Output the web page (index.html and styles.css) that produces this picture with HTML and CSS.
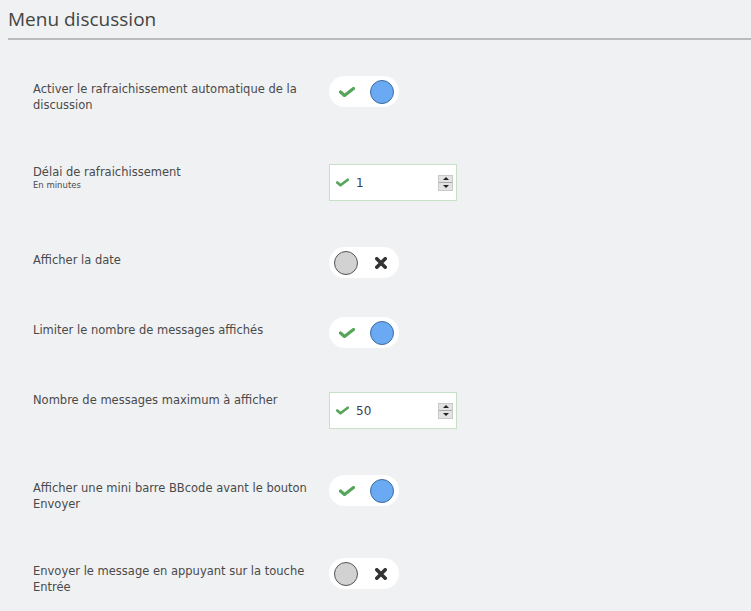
FILE: index.html
```html
<!DOCTYPE html>
<html lang="fr">
<head>
<meta charset="utf-8">
<title>Menu discussion</title>
<link rel="stylesheet" href="styles.css">
</head>
<body>
<div class="page">
  <h1 class="title">Menu discussion</h1>
  <div class="rows">
    <div class="row">
      <div class="label">Activer le rafraichissement automatique de la discussion</div>
      <div class="toggle on"><svg class="chk" viewBox="0 0 16 10"><path d="M1.5 5 L5.5 8.5 L14.5 1.5" /></svg><span class="knob"></span></div>
    </div>
    <div class="row">
      <div class="label">Délai de rafraichissement<span class="hint">En minutes</span></div>
      <div class="field"><svg class="chk" viewBox="0 0 16 10"><path d="M1.5 5 L5.5 8.5 L14.5 1.5" /></svg><span class="value">1</span><span class="spin"><span class="up"></span><span class="down"></span></span></div>
    </div>
    <div class="row">
      <div class="label">Afficher la date</div>
      <div class="toggle off"><span class="knob"></span><svg class="cross" viewBox="0 0 10 10"><path d="M1.5 1.5 L8.5 8.5 M8.5 1.5 L1.5 8.5" /></svg></div>
    </div>
    <div class="row">
      <div class="label">Limiter le nombre de messages affichés</div>
      <div class="toggle on"><svg class="chk" viewBox="0 0 16 10"><path d="M1.5 5 L5.5 8.5 L14.5 1.5" /></svg><span class="knob"></span></div>
    </div>
    <div class="row">
      <div class="label">Nombre de messages maximum à afficher</div>
      <div class="field"><svg class="chk" viewBox="0 0 16 10"><path d="M1.5 5 L5.5 8.5 L14.5 1.5" /></svg><span class="value">50</span><span class="spin"><span class="up"></span><span class="down"></span></span></div>
    </div>
    <div class="row">
      <div class="label">Afficher une mini barre BBcode avant le bouton Envoyer</div>
      <div class="toggle on"><svg class="chk" viewBox="0 0 16 10"><path d="M1.5 5 L5.5 8.5 L14.5 1.5" /></svg><span class="knob"></span></div>
    </div>
    <div class="row">
      <div class="label">Envoyer le message en appuyant sur la touche Entrée</div>
      <div class="toggle off"><span class="knob"></span><svg class="cross" viewBox="0 0 10 10"><path d="M1.5 1.5 L8.5 8.5 M8.5 1.5 L1.5 8.5" /></svg></div>
    </div>
  </div>
</div>
</body>
</html>
```
FILE: styles.css
```css
html, body {
  margin: 0;
  padding: 0;
  background: #f0f1f3;
}
body {
  font-family: "DejaVu Sans", sans-serif;
  color: #4a4a4a;
  width: 751px;
  height: 611px;
  overflow: hidden;
}
.page {
  padding-left: 8px;
}
.title {
  margin: 0;
  font-family: "Open Sans", sans-serif;
  font-weight: normal;
  font-size: 19px;
  line-height: 24px;
  padding-top: 7px;
  padding-bottom: 7px;
  color: #444;
  border-bottom: 2px solid #bbbbbb;
}
.rows {
  padding-top: 39px;
  padding-left: 25px;
}
.row {
  display: flex;
  align-items: flex-start;
}
.label {
  width: 290px;
  margin-right: 6px;
  font-size: 11.5px;
  line-height: 16px;
  padding-top: 2px;
  padding-bottom: 49px;
}
.hint {
  display: block;
  font-size: 8.5px;
  line-height: 11px;
}
.toggle {
  width: 70px;
  height: 31px;
  margin-top: -3px;
  margin-bottom: 42px;
  border-radius: 16px;
  background: #fff;
  display: flex;
  align-items: center;
  box-sizing: border-box;
  flex-shrink: 0;
}
.row:last-child .toggle,
.row:last-child .label {
  margin-bottom: 0;
  padding-bottom: 0;
}
.toggle.on {
  padding-left: 10px;
}
.toggle.off {
  padding-left: 5px;
}
.chk {
  width: 16px;
  height: 10px;
  fill: none;
  stroke: #55a65a;
  stroke-width: 3.2;
  stroke-linecap: round;
  stroke-linejoin: round;
}
.toggle.on .chk {
  margin-right: 15px;
}
.knob {
  width: 22px;
  height: 22px;
  border-radius: 50%;
  box-sizing: content-box;
}
.toggle.on .knob {
  background: #6aaaf2;
  border: 1px solid #3f6c9e;
}
.toggle.off .knob {
  background: #d2d2d2;
  border: 1px solid #555;
  margin-right: 17px;
}
.cross {
  width: 12px;
  height: 12px;
  fill: none;
  stroke: #333;
  stroke-width: 3;
  stroke-linecap: round;
}
.field {
  width: 128px;
  height: 37px;
  margin-top: 2px;
  margin-bottom: 49px;
  box-sizing: border-box;
  background: #fff;
  border: 1px solid #c8dfc8;
  display: flex;
  align-items: center;
  padding-left: 6px;
  flex-shrink: 0;
}
.field .chk {
  width: 13px;
  height: 9px;
  margin-right: 7px;
}
.value {
  flex: 1;
  font-size: 12px;
  color: #3c3c50;
}
.spin {
  width: 15px;
  height: 16px;
  margin-right: 3px;
  background: #e3e3e3;
  border: 1px solid #c9c9c9;
  box-sizing: border-box;
  display: flex;
  flex-direction: column;
}
.spin .up, .spin .down {
  flex: 1;
  display: flex;
  align-items: center;
  justify-content: center;
}
.spin .up {
  border-bottom: 1px solid #a8a8a8;
}
.spin .up::before {
  content: "";
  border-left: 3px solid transparent;
  border-right: 3px solid transparent;
  border-bottom: 3px solid #222;
}
.spin .down::before {
  content: "";
  border-left: 3px solid transparent;
  border-right: 3px solid transparent;
  border-top: 3px solid #222;
}
```
